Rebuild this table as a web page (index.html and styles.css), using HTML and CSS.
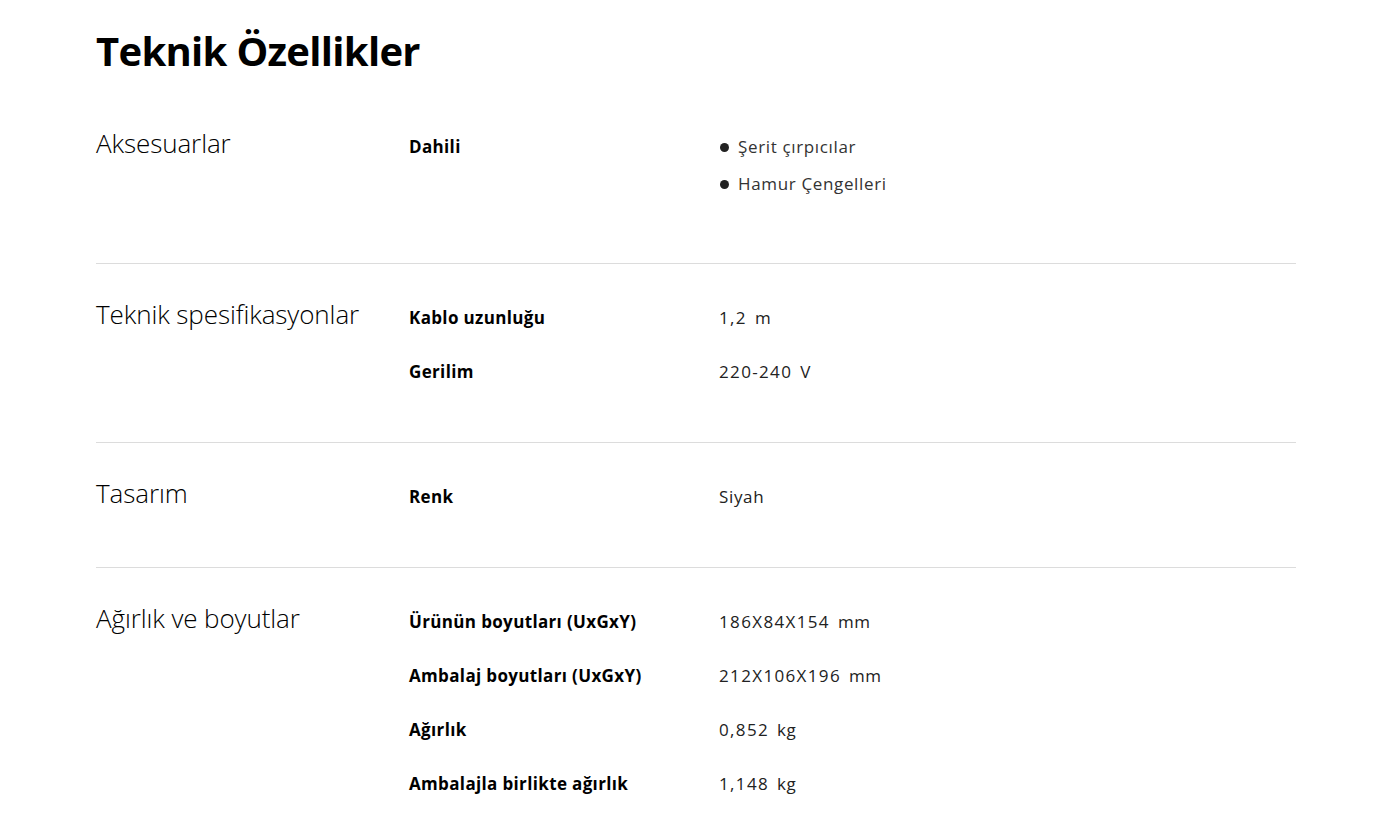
FILE: index.html
```html
<!DOCTYPE html>
<html lang="tr">
<head>
<meta charset="utf-8">
<title>Teknik Özellikler</title>
<link rel="stylesheet" href="styles.css">
</head>
<body>
<main class="specs">
  <h1 class="specs-title">Teknik Özellikler</h1>

  <section class="group">
    <h2 class="group-title">Aksesuarlar</h2>
    <div class="rows">
      <div class="label">Dahili</div>
      <div class="value">
        <ul class="bullets">
          <li>Şerit çırpıcılar</li>
          <li>Hamur Çengelleri</li>
        </ul>
      </div>
    </div>
  </section>

  <section class="group">
    <h2 class="group-title">Teknik spesifikasyonlar</h2>
    <div class="rows">
      <div class="label">Kablo uzunluğu</div>
      <div class="value"><span class="num">1,2</span><span class="unit">m</span></div>
      <div class="label">Gerilim</div>
      <div class="value"><span class="num">220-240</span><span class="unit">V</span></div>
    </div>
  </section>

  <section class="group">
    <h2 class="group-title">Tasarım</h2>
    <div class="rows">
      <div class="label">Renk</div>
      <div class="value">Siyah</div>
    </div>
  </section>

  <section class="group last">
    <h2 class="group-title">Ağırlık ve boyutlar</h2>
    <div class="rows">
      <div class="label">Ürünün boyutları (UxGxY)</div>
      <div class="value"><span class="num">186X84X154</span><span class="unit">mm</span></div>
      <div class="label">Ambalaj boyutları (UxGxY)</div>
      <div class="value"><span class="num">212X106X196</span><span class="unit">mm</span></div>
      <div class="label">Ağırlık</div>
      <div class="value"><span class="num">0,852</span><span class="unit">kg</span></div>
      <div class="label">Ambalajla birlikte ağırlık</div>
      <div class="value"><span class="num">1,148</span><span class="unit">kg</span></div>
    </div>
  </section>
</main>
</body>
</html>
```

FILE: styles.css
```css
html, body {
  margin: 0;
  padding: 0;
  background: #ffffff;
}

body {
  font-family: "Open Sans", "Noto Sans", "Liberation Sans", sans-serif;
  color: #000000;
}

.specs {
  width: 1200px;
  margin-left: 96px;
}

.specs-title {
  margin: 27px 0 18px;
  font-size: 40px;
  line-height: 48px;
  font-weight: 700;
  letter-spacing: -0.7px;
}

.group {
  display: flex;
  align-items: baseline;
  padding: 34px 0 57px;
  border-bottom: 1px solid #dcdcdc;
}

.group.last {
  border-bottom: none;
}

.group-title {
  flex: 0 0 313px;
  margin: 0;
  font-size: 26px;
  line-height: 32px;
  font-weight: 300;
  letter-spacing: -0.1px;
  color: #000;
}

.rows {
  flex: 1;
  display: grid;
  grid-template-columns: 310px 1fr;
  row-gap: 28px;
  font-size: 17px;
  line-height: 26px;
}

.label {
  font-weight: 700;
  color: #000;
  letter-spacing: 0.35px;
}

.value {
  color: #222;
  letter-spacing: 0.65px;
}

.num {
  letter-spacing: 1.35px;
}

.unit {
  margin-left: 8px;
}

.bullets {
  list-style: none;
  margin: 0 0 9px;
  padding: 0;
  color: #333;
}

.bullets li {
  display: flex;
  align-items: center;
  margin-bottom: 11px;
}

.bullets li:last-child {
  margin-bottom: 0;
}

.bullets li::before {
  content: "";
  width: 9px;
  height: 9px;
  border-radius: 50%;
  background: #222;
  margin: 0 9px 0 1px;
  flex: 0 0 auto;
}
```
